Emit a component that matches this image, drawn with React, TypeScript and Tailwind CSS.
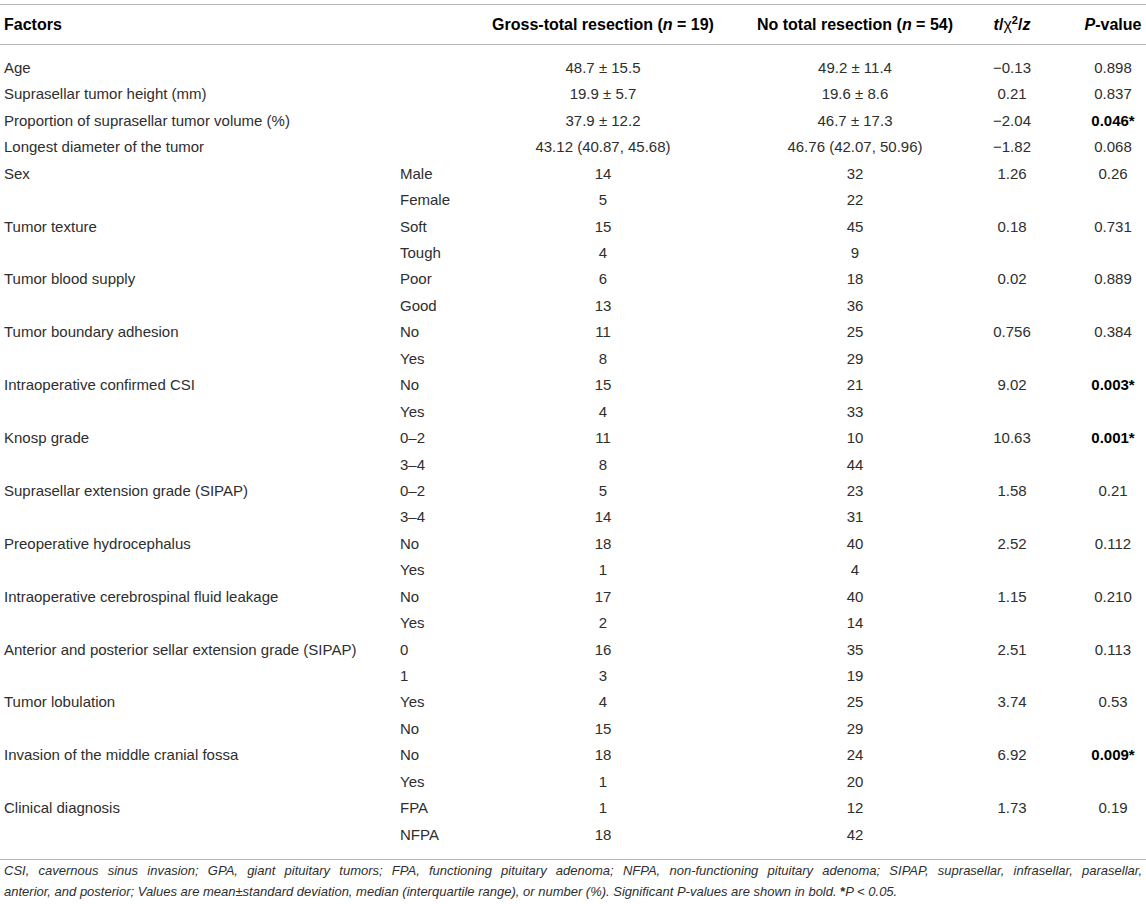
import React from 'react';

interface Row {
  factor?: string;
  sub?: string;
  gross: string;
  none: string;
  stat?: string;
  p?: string;
  bold?: boolean;
}

const rows: Row[] = [
  { factor: 'Age', gross: '48.7 ± 15.5', none: '49.2 ± 11.4', stat: '−0.13', p: '0.898' },
  { factor: 'Suprasellar tumor height (mm)', gross: '19.9 ± 5.7', none: '19.6 ± 8.6', stat: '0.21', p: '0.837' },
  { factor: 'Proportion of suprasellar tumor volume (%)', gross: '37.9 ± 12.2', none: '46.7 ± 17.3', stat: '−2.04', p: '0.046*', bold: true },
  { factor: 'Longest diameter of the tumor', gross: '43.12 (40.87, 45.68)', none: '46.76 (42.07, 50.96)', stat: '−1.82', p: '0.068' },
  { factor: 'Sex', sub: 'Male', gross: '14', none: '32', stat: '1.26', p: '0.26' },
  { sub: 'Female', gross: '5', none: '22' },
  { factor: 'Tumor texture', sub: 'Soft', gross: '15', none: '45', stat: '0.18', p: '0.731' },
  { sub: 'Tough', gross: '4', none: '9' },
  { factor: 'Tumor blood supply', sub: 'Poor', gross: '6', none: '18', stat: '0.02', p: '0.889' },
  { sub: 'Good', gross: '13', none: '36' },
  { factor: 'Tumor boundary adhesion', sub: 'No', gross: '11', none: '25', stat: '0.756', p: '0.384' },
  { sub: 'Yes', gross: '8', none: '29' },
  { factor: 'Intraoperative confirmed CSI', sub: 'No', gross: '15', none: '21', stat: '9.02', p: '0.003*', bold: true },
  { sub: 'Yes', gross: '4', none: '33' },
  { factor: 'Knosp grade', sub: '0–2', gross: '11', none: '10', stat: '10.63', p: '0.001*', bold: true },
  { sub: '3–4', gross: '8', none: '44' },
  { factor: 'Suprasellar extension grade (SIPAP)', sub: '0–2', gross: '5', none: '23', stat: '1.58', p: '0.21' },
  { sub: '3–4', gross: '14', none: '31' },
  { factor: 'Preoperative hydrocephalus', sub: 'No', gross: '18', none: '40', stat: '2.52', p: '0.112' },
  { sub: 'Yes', gross: '1', none: '4' },
  { factor: 'Intraoperative cerebrospinal fluid leakage', sub: 'No', gross: '17', none: '40', stat: '1.15', p: '0.210' },
  { sub: 'Yes', gross: '2', none: '14' },
  { factor: 'Anterior and posterior sellar extension grade (SIPAP)', sub: '0', gross: '16', none: '35', stat: '2.51', p: '0.113' },
  { sub: '1', gross: '3', none: '19' },
  { factor: 'Tumor lobulation', sub: 'Yes', gross: '4', none: '25', stat: '3.74', p: '0.53' },
  { sub: 'No', gross: '15', none: '29' },
  { factor: 'Invasion of the middle cranial fossa', sub: 'No', gross: '18', none: '24', stat: '6.92', p: '0.009*', bold: true },
  { sub: 'Yes', gross: '1', none: '20' },
  { factor: 'Clinical diagnosis', sub: 'FPA', gross: '1', none: '12', stat: '1.73', p: '0.19' },
  { sub: 'NFPA', gross: '18', none: '42' },
];

const grid = 'grid grid-cols-[396px_84px_246px_244px_84px_92px] items-center';

export default function App() {
  return (
    <div className="w-[1146px] bg-white pt-1 font-['Liberation_Sans',Arial,sans-serif] text-[15px] text-[#2e2e2e]">
      <div className="border-t-[1.5px] border-b-[1.5px] border-[#b5b5b5]">
        <div className={`${grid} h-[39px] text-[16px] font-bold text-black`}>
          <div className="pl-1">Factors</div>
          <div />
          <div className="text-center whitespace-nowrap">
            Gross-total resection (<i>n</i> = 19)
          </div>
          <div className="pl-[14px] text-center whitespace-nowrap">
            No total resection (<i>n</i> = 54)
          </div>
          <div className="text-center whitespace-nowrap">
            <i>t</i>/<span className="font-normal">χ</span>
            <sup className="text-[11px]">2</sup>/<i>z</i>
          </div>
          <div className="pl-[26px] text-center whitespace-nowrap">
            <i>P</i>-value
          </div>
        </div>
      </div>
      <div className="pt-[10px] pb-[11px] border-b-[1.5px] border-[#b5b5b5]">
        {rows.map((r, i) => (
          <div key={i} className={`${grid} h-[26.45px]`}>
            <div className="pl-1 whitespace-nowrap">{r.factor}</div>
            <div className="pl-1 whitespace-nowrap">{r.sub}</div>
            <div className="text-center whitespace-nowrap">{r.gross}</div>
            <div className="pl-[14px] text-center whitespace-nowrap">{r.none}</div>
            <div className="text-center whitespace-nowrap">{r.stat}</div>
            <div className={`pl-[26px] text-center whitespace-nowrap ${r.bold ? 'font-bold text-black' : ''}`}>{r.p}</div>
          </div>
        ))}
      </div>
      <div className="px-1 text-[13px] leading-[21px] italic text-[#2e2e2e]">
        <p className="text-justify [text-align-last:justify]">
          CSI, cavernous sinus invasion; GPA, giant pituitary tumors; FPA, functioning pituitary adenoma; NFPA,
          non-functioning pituitary adenoma; SIPAP, suprasellar, infrasellar, parasellar,
        </p>
        <p>
          anterior, and posterior; Values are mean±standard deviation, median (interquartile range), or number (%).
          Significant P-values are shown in bold. <b className="not-italic font-bold">*</b>P &lt; 0.05.
        </p>
      </div>
    </div>
  );
}
